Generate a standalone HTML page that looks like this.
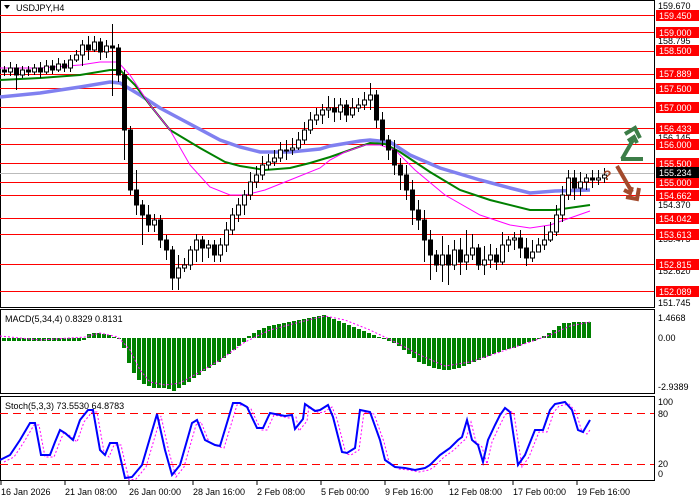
<!DOCTYPE html>
<html><head><meta charset="utf-8"><style>
body{margin:0;background:#fff;}
svg{display:block;font-family:"Liberation Sans",sans-serif;}
.b{fill:#000;stroke:#000;stroke-width:1}
.w{fill:#fff;stroke:#000;stroke-width:1}
</style></head><body>
<svg width="700" height="500" viewBox="0 0 700 500" xmlns="http://www.w3.org/2000/svg">
<rect width="700" height="500" fill="#fff"/>
<rect x="0.5" y="0.5" width="654" height="307" fill="none" stroke="#000"/>
<rect x="0.5" y="309.5" width="654" height="84" fill="none" stroke="#000"/>
<rect x="0.5" y="396.5" width="654" height="84" fill="none" stroke="#000"/>
<g stroke="#f00" stroke-width="1">
<line x1="0" x2="654" y1="15.5" y2="15.5"/><line x1="0" x2="654" y1="32.5" y2="32.5"/>
<line x1="0" x2="654" y1="51.5" y2="51.5"/><line x1="0" x2="654" y1="74.5" y2="74.5"/>
<line x1="0" x2="654" y1="88.5" y2="88.5"/><line x1="0" x2="654" y1="107.5" y2="107.5"/>
<line x1="0" x2="654" y1="128.5" y2="128.5"/><line x1="0" x2="654" y1="144.5" y2="144.5"/>
<line x1="0" x2="654" y1="163.5" y2="163.5"/><line x1="0" x2="654" y1="182.5" y2="182.5"/>
<line x1="0" x2="654" y1="195.5" y2="195.5"/><line x1="0" x2="654" y1="218.5" y2="218.5"/>
<line x1="0" x2="654" y1="234.5" y2="234.5"/><line x1="0" x2="654" y1="264.5" y2="264.5"/>
<line x1="0" x2="654" y1="291.5" y2="291.5"/>
</g>
<line x1="0" x2="654" y1="173.5" y2="173.5" stroke="#bbb"/>
<polyline fill="none" stroke="#8080f0" stroke-width="3.5" points="0,97 40,93 80,87 110,82 120,83 140,95 160,108 190,124 220,140 240,147 260,152 290,152 320,149 330,146 360,141 370,140 390,142 410,155 440,168 480,180 510,188 530,193 555,191 590,190"/>
<polyline fill="none" stroke="#008000" stroke-width="2" points="0,80 40,78 80,75 110,70 120,70 135,85 150,105 170,130 200,148 225,162 240,166 265,170 290,168 310,163 330,157 350,150 370,143 385,144 400,152 430,172 460,190 490,200 530,210 555,210 590,205"/>
<polyline fill="none" stroke="#ff00ff" stroke-width="1" points="0,68 40,68 80,65 100,62 118,62 130,75 150,105 170,130 190,165 210,187 230,195 245,195 265,190 290,180 320,168 330,160 345,152 365,145 380,145 395,150 415,170 445,195 480,215 510,225 530,228 550,225 570,218 590,211"/>
<path stroke="#000" stroke-width="1" fill="none" d="M4.5 66V76M10.5 62V76M16.5 64V90M22.5 66V78M28.5 66V76M34.5 64V75M40.5 62V78M46.5 60V74M52.5 60V74M58.5 58V72M64.5 60V72M70.5 55V72M76.5 50V62M82.5 40V66M88.5 36V60M94.5 36V52M100.5 38V60M106.5 40V58M112.5 24V96M118.5 44V82M124.5 70V160M130.5 126V195M136.5 170V215M142.5 200V245M148.5 205V232M154.5 214V232M160.5 215V248M166.5 235V260M172.5 246V290M178.5 255V290M184.5 258V272M190.5 246V270M196.5 234V262M202.5 236V262M208.5 240V258M214.5 240V262M220.5 238V262M226.5 222V252M232.5 208V235M238.5 198V222M244.5 190V215M250.5 172V200M256.5 166V188M262.5 156V180M268.5 154V170M274.5 150V166M280.5 142V162M286.5 140V160M292.5 138V155M298.5 132V150M304.5 122V144M310.5 112V134M316.5 108V125M322.5 104V124M328.5 96V118M334.5 98V122M340.5 98V120M346.5 100V122M352.5 98V118M358.5 98V112M364.5 92V110M370.5 83V110M376.5 90V128M382.5 112V146M388.5 135V160M394.5 140V175M400.5 158V190M406.5 165V200M412.5 180V225M418.5 200V230M424.5 210V262M430.5 230V280M436.5 250V272M442.5 236V282M448.5 245V285M454.5 240V270M460.5 238V275M466.5 230V270M472.5 234V260M478.5 244V270M484.5 246V275M490.5 244V268M496.5 248V270M502.5 232V265M508.5 236V252M514.5 232V250M520.5 230V258M526.5 238V266M532.5 240V262M538.5 238V252M544.5 226V250M550.5 222V242M556.5 205V236M562.5 186V222M568.5 170V200M574.5 170V200M580.5 172V196M586.5 174V190M592.5 170V188M598.5 170V185M604.5 168V183"/>
<g>
<rect class="b" x="2.5" y="70" width="4" height="2"/><rect class="w" x="8.5" y="68" width="4" height="4"/><rect class="b" x="14.5" y="68" width="4" height="7"/><rect class="w" x="20.5" y="70" width="4" height="5"/><rect class="b" x="26.5" y="70" width="4" height="2"/><rect class="w" x="32.5" y="68" width="4" height="4"/><rect class="b" x="38.5" y="68" width="4" height="4"/><rect class="w" x="44.5" y="66" width="4" height="6"/><rect class="b" x="50.5" y="66" width="4" height="4"/><rect class="w" x="56.5" y="64" width="4" height="6"/><rect class="b" x="62.5" y="64" width="4" height="4"/><rect class="w" x="68.5" y="60" width="4" height="8"/><rect class="w" x="74.5" y="55" width="4" height="5"/><rect class="w" x="80.5" y="45" width="4" height="10"/><rect class="b" x="86.5" y="45" width="4" height="5"/><rect class="w" x="92.5" y="42" width="4" height="8"/><rect class="b" x="98.5" y="42" width="4" height="10"/><rect class="w" x="104.5" y="46" width="4" height="6"/><rect class="b" x="110.5" y="46" width="4" height="2"/><rect class="b" x="116.5" y="48" width="4" height="27"/><rect class="b" x="122.5" y="75" width="4" height="55"/><rect class="b" x="128.5" y="130" width="4" height="60"/><rect class="b" x="134.5" y="190" width="4" height="15"/><rect class="b" x="140.5" y="205" width="4" height="10"/><rect class="b" x="146.5" y="215" width="4" height="10"/><rect class="w" x="152.5" y="220" width="4" height="5"/><rect class="b" x="158.5" y="220" width="4" height="20"/><rect class="b" x="164.5" y="240" width="4" height="10"/><rect class="b" x="170.5" y="250" width="4" height="28"/><rect class="w" x="176.5" y="268" width="4" height="10"/><rect class="w" x="182.5" y="265" width="4" height="3"/><rect class="w" x="188.5" y="250" width="4" height="15"/><rect class="w" x="194.5" y="240" width="4" height="10"/><rect class="b" x="200.5" y="240" width="4" height="8"/><rect class="w" x="206.5" y="245" width="4" height="3"/><rect class="b" x="212.5" y="245" width="4" height="10"/><rect class="w" x="218.5" y="245" width="4" height="10"/><rect class="w" x="224.5" y="230" width="4" height="15"/><rect class="w" x="230.5" y="215" width="4" height="15"/><rect class="w" x="236.5" y="205" width="4" height="10"/><rect class="w" x="242.5" y="195" width="4" height="10"/><rect class="w" x="248.5" y="182" width="4" height="13"/><rect class="w" x="254.5" y="175" width="4" height="7"/><rect class="w" x="260.5" y="165" width="4" height="10"/><rect class="w" x="266.5" y="162" width="4" height="3"/><rect class="w" x="272.5" y="158" width="4" height="4"/><rect class="w" x="278.5" y="150" width="4" height="8"/><rect class="b" x="284.5" y="150" width="4" height="1"/><rect class="w" x="290.5" y="148" width="4" height="2"/><rect class="w" x="296.5" y="140" width="4" height="8"/><rect class="w" x="302.5" y="130" width="4" height="10"/><rect class="w" x="308.5" y="120" width="4" height="10"/><rect class="w" x="314.5" y="115" width="4" height="5"/><rect class="w" x="320.5" y="110" width="4" height="5"/><rect class="w" x="326.5" y="108" width="4" height="2"/><rect class="b" x="332.5" y="108" width="4" height="4"/><rect class="w" x="338.5" y="105" width="4" height="7"/><rect class="b" x="344.5" y="105" width="4" height="10"/><rect class="w" x="350.5" y="108" width="4" height="7"/><rect class="w" x="356.5" y="105" width="4" height="3"/><rect class="w" x="362.5" y="100" width="4" height="5"/><rect class="w" x="368.5" y="95" width="4" height="5"/><rect class="b" x="374.5" y="95" width="4" height="25"/><rect class="b" x="380.5" y="120" width="4" height="20"/><rect class="b" x="386.5" y="140" width="4" height="10"/><rect class="b" x="392.5" y="150" width="4" height="15"/><rect class="b" x="398.5" y="165" width="4" height="10"/><rect class="b" x="404.5" y="175" width="4" height="15"/><rect class="b" x="410.5" y="190" width="4" height="20"/><rect class="b" x="416.5" y="210" width="4" height="10"/><rect class="b" x="422.5" y="220" width="4" height="20"/><rect class="b" x="428.5" y="240" width="4" height="15"/><rect class="b" x="434.5" y="255" width="4" height="10"/><rect class="w" x="440.5" y="255" width="4" height="10"/><rect class="b" x="446.5" y="255" width="4" height="10"/><rect class="w" x="452.5" y="250" width="4" height="15"/><rect class="b" x="458.5" y="250" width="4" height="12"/><rect class="w" x="464.5" y="255" width="4" height="7"/><rect class="w" x="470.5" y="248" width="4" height="7"/><rect class="b" x="476.5" y="248" width="4" height="17"/><rect class="w" x="482.5" y="260" width="4" height="5"/><rect class="w" x="488.5" y="255" width="4" height="5"/><rect class="b" x="494.5" y="255" width="4" height="7"/><rect class="w" x="500.5" y="245" width="4" height="17"/><rect class="w" x="506.5" y="240" width="4" height="5"/><rect class="w" x="512.5" y="238" width="4" height="2"/><rect class="b" x="518.5" y="238" width="4" height="10"/><rect class="b" x="524.5" y="248" width="4" height="10"/><rect class="w" x="530.5" y="252" width="4" height="6"/><rect class="w" x="536.5" y="245" width="4" height="7"/><rect class="w" x="542.5" y="240" width="4" height="5"/><rect class="w" x="548.5" y="232" width="4" height="8"/><rect class="w" x="554.5" y="215" width="4" height="17"/><rect class="w" x="560.5" y="195" width="4" height="20"/><rect class="w" x="566.5" y="178" width="4" height="17"/><rect class="b" x="572.5" y="178" width="4" height="10"/><rect class="w" x="578.5" y="182" width="4" height="6"/><rect class="w" x="584.5" y="178" width="4" height="4"/><rect class="b" x="590.5" y="178" width="4" height="2"/><rect class="w" x="596.5" y="178" width="4" height="2"/><rect class="w" x="602.5" y="175" width="4" height="3"/>
</g>
<g font-size="9" fill="#000">
<text x="658" y="9">159.670</text><text x="658" y="44">158.795</text><text x="658" y="141">156.145</text>
<text x="658" y="208">154.370</text><text x="658" y="242">153.475</text><text x="658" y="274">152.620</text><text x="658" y="306">151.745</text>
</g>
<g fill="#f00">
<rect x="656" y="10" width="43" height="11"/><rect x="656" y="27" width="43" height="11"/><rect x="656" y="45" width="43" height="11"/>
<rect x="656" y="68" width="43" height="11"/><rect x="656" y="83" width="43" height="11"/><rect x="656" y="102" width="43" height="11"/>
<rect x="656" y="123" width="43" height="11"/><rect x="656" y="139" width="43" height="11"/><rect x="656" y="158" width="43" height="11"/>
<rect x="656" y="177" width="43" height="11"/><rect x="656" y="190" width="43" height="11"/><rect x="656" y="213" width="43" height="11"/>
<rect x="656" y="229" width="43" height="11"/><rect x="656" y="259" width="43" height="11"/><rect x="656" y="286" width="43" height="11"/>
</g>
<rect x="656" y="167" width="43" height="11" fill="#000"/>
<g font-size="9" fill="#fff">
<text x="659" y="19">159.450</text><text x="659" y="36">159.000</text><text x="659" y="54">158.500</text>
<text x="659" y="77">157.889</text><text x="659" y="92">157.500</text><text x="659" y="111">157.000</text>
<text x="659" y="132">156.433</text><text x="659" y="148">156.000</text><text x="659" y="167">155.500</text>
<text x="659" y="176">155.234</text><text x="659" y="186">155.000</text><text x="659" y="199">154.662</text>
<text x="659" y="222">154.042</text><text x="659" y="238">153.613</text><text x="659" y="268">152.815</text>
<text x="659" y="295">152.089</text>
</g>
<!-- arrows -->
<g fill="none" stroke="#3c7d47" stroke-width="4" stroke-linecap="butt" stroke-linejoin="miter">
<path d="M621,159 L643,159 M622,159 L633,140"/>
<path d="M625,134 L635,128 L640,138 M628,141 L634,137 L637,143"/>
</g>
<g fill="none" stroke="#a24a2c" stroke-width="4" stroke-linecap="butt" stroke-linejoin="miter">
<path d="M617,166 L632,192"/>
<path d="M626,197 L637,199 L639,188 M624,190 L630,193 L632,187"/>
</g>
<text x="603" y="180" font-size="14" font-weight="bold" fill="#a24a2c">?</text>
<text x="16" y="11" font-size="9">USDJPY,H4</text>
<polygon points="4,5 10,5 7,9" fill="#000"/>
<text x="5" y="322" font-size="9">MACD(5,34,4) 0.8329 0.8131</text>
<g fill="#008000">
<rect x="2" y="338" width="4" height="3"/><rect x="7" y="338" width="4" height="3"/><rect x="12" y="338" width="4" height="3"/><rect x="17" y="338" width="4" height="3"/><rect x="22" y="338" width="4" height="3"/><rect x="27" y="338" width="4" height="3"/><rect x="32" y="338" width="4" height="3"/><rect x="37" y="338" width="4" height="3"/><rect x="42" y="338" width="4" height="3"/><rect x="47" y="338" width="4" height="3"/><rect x="52" y="338" width="4" height="3"/><rect x="57" y="338" width="4" height="3"/><rect x="62" y="338" width="4" height="3"/><rect x="67" y="338" width="4" height="3"/><rect x="72" y="338" width="4" height="3"/><rect x="77" y="338" width="4" height="3"/><rect x="82" y="338" width="4" height="2"/>
<rect x="87" y="334" width="4" height="4"/><rect x="92" y="333" width="4" height="5"/><rect x="97" y="333" width="4" height="5"/><rect x="102" y="334" width="4" height="4"/><rect x="107" y="335" width="4" height="3"/><rect x="112" y="337" width="4" height="1"/><rect x="117" y="338" width="4" height="1"/>
<rect x="122" y="338" width="4" height="10"/><rect x="127" y="338" width="4" height="25"/><rect x="132" y="338" width="4" height="35"/><rect x="137" y="338" width="4" height="42"/><rect x="142" y="338" width="4" height="46"/><rect x="147" y="338" width="4" height="48"/><rect x="152" y="338" width="4" height="50"/><rect x="157" y="338" width="4" height="50"/><rect x="162" y="338" width="4" height="50"/><rect x="167" y="338" width="4" height="51"/><rect x="172" y="338" width="4" height="53"/><rect x="177" y="338" width="4" height="50"/><rect x="182" y="338" width="4" height="47"/>
<rect x="187" y="338" width="4" height="44"/><rect x="192" y="338" width="4" height="40"/><rect x="197" y="338" width="4" height="37"/><rect x="202" y="338" width="4" height="33"/><rect x="207" y="338" width="4" height="30"/><rect x="212" y="338" width="4" height="27"/><rect x="217" y="338" width="4" height="24"/><rect x="222" y="338" width="4" height="20"/><rect x="227" y="338" width="4" height="16"/><rect x="232" y="338" width="4" height="12"/><rect x="237" y="338" width="4" height="8"/><rect x="242" y="338" width="4" height="4"/>
<rect x="247" y="336" width="4" height="2"/><rect x="252" y="333" width="4" height="5"/><rect x="257" y="330" width="4" height="8"/><rect x="262" y="328" width="4" height="10"/><rect x="267" y="326" width="4" height="12"/><rect x="272" y="325" width="4" height="13"/><rect x="277" y="324" width="4" height="14"/><rect x="282" y="323" width="4" height="15"/><rect x="287" y="322" width="4" height="16"/><rect x="292" y="321" width="4" height="17"/><rect x="297" y="320" width="4" height="18"/><rect x="302" y="319" width="4" height="19"/><rect x="307" y="318" width="4" height="20"/><rect x="312" y="317" width="4" height="21"/><rect x="317" y="316" width="4" height="22"/><rect x="322" y="315" width="4" height="23"/><rect x="327" y="317" width="4" height="21"/>
<rect x="332" y="319" width="4" height="19"/><rect x="337" y="321" width="4" height="17"/><rect x="342" y="323" width="4" height="15"/><rect x="347" y="325" width="4" height="13"/><rect x="352" y="327" width="4" height="11"/><rect x="357" y="329" width="4" height="9"/><rect x="362" y="331" width="4" height="7"/><rect x="367" y="333" width="4" height="5"/><rect x="372" y="335" width="4" height="3"/><rect x="377" y="337" width="4" height="1"/><rect x="382" y="338" width="4" height="1"/><rect x="387" y="338" width="4" height="3"/><rect x="392" y="338" width="4" height="5"/>
<rect x="397" y="338" width="4" height="8"/><rect x="402" y="338" width="4" height="12"/><rect x="407" y="338" width="4" height="16"/><rect x="412" y="338" width="4" height="20"/><rect x="417" y="338" width="4" height="24"/><rect x="422" y="338" width="4" height="26"/><rect x="427" y="338" width="4" height="28"/><rect x="432" y="338" width="4" height="30"/><rect x="437" y="338" width="4" height="31"/><rect x="442" y="338" width="4" height="32"/><rect x="447" y="338" width="4" height="32"/><rect x="452" y="338" width="4" height="31"/><rect x="457" y="338" width="4" height="30"/><rect x="462" y="338" width="4" height="28"/><rect x="467" y="338" width="4" height="26"/><rect x="472" y="338" width="4" height="24"/><rect x="477" y="338" width="4" height="22"/><rect x="482" y="338" width="4" height="20"/><rect x="487" y="338" width="4" height="18"/><rect x="492" y="338" width="4" height="16"/><rect x="497" y="338" width="4" height="14"/><rect x="502" y="338" width="4" height="12"/><rect x="507" y="338" width="4" height="11"/><rect x="512" y="338" width="4" height="10"/><rect x="517" y="338" width="4" height="8"/><rect x="522" y="338" width="4" height="6"/><rect x="527" y="338" width="4" height="4"/><rect x="532" y="338" width="4" height="3"/><rect x="537" y="338" width="4" height="1"/>
<rect x="542" y="336" width="4" height="2"/><rect x="547" y="333" width="4" height="5"/><rect x="552" y="330" width="4" height="8"/><rect x="557" y="326" width="4" height="12"/><rect x="562" y="323" width="4" height="15"/><rect x="567" y="323" width="4" height="15"/><rect x="572" y="322" width="4" height="16"/><rect x="577" y="322" width="4" height="16"/><rect x="582" y="322" width="4" height="16"/><rect x="587" y="322" width="4" height="16"/>
</g>
<polyline fill="none" stroke="#ff00ff" stroke-dasharray="2,2" points="0,336 40,340 85,337 100,333 118,337 130,350 140,370 150,382 165,385 180,383 200,372 220,360 245,342 270,330 300,322 325,316 345,320 370,330 395,342 420,355 445,366 470,362 500,352 530,342 550,335 570,326 590,322"/>
<g font-size="9"><text x="658" y="321">1.4668</text><text x="658" y="341">0.00</text><text x="658" y="390">-2.9389</text></g>
<text x="5" y="409" font-size="9">Stoch(5,3,3) 73.5530 64.8783</text>
<g stroke="#f00" stroke-width="1" stroke-dasharray="8,5"><line x1="0" x2="654" y1="413.5" y2="413.5"/><line x1="0" x2="654" y1="464.5" y2="464.5"/></g>
<polyline fill="none" stroke="#ff00ff" stroke-dasharray="2,2" transform="translate(4,2)" points="0,460 10,455 20,440 30,423 35,423 41,455 50,455 55,442 60,430 65,433 73,440 80,420 88,410 93,410 100,450 105,455 110,443 117,443 125,478 132,477 142,465 157,414 165,450 172,475 180,465 192,423 197,420 205,440 215,445 220,446 233,403 240,403 247,407 257,428 263,428 270,413 285,416 292,415 295,429 303,419 305,404 315,411 320,410 328,405 333,417 342,452 347,453 355,448 360,410 370,412 380,440 385,460 395,467 405,468 415,470 425,468 430,465 440,455 450,448 458,440 462,437 467,420 472,440 478,445 483,462 488,440 495,425 500,415 505,408 510,412 518,465 525,455 535,430 543,430 550,410 555,404 565,402 572,410 578,430 583,432 586,428"/>
<polyline fill="none" stroke="#0000ff" stroke-width="2" points="0,460 10,455 20,440 30,423 35,423 41,455 50,455 55,442 60,430 65,433 73,440 80,420 88,410 93,410 100,450 105,455 110,443 117,443 125,478 132,477 142,465 157,414 165,450 172,475 180,465 192,423 197,420 205,440 215,445 220,446 233,403 240,403 247,407 257,428 263,428 270,413 285,416 292,415 295,429 303,419 305,404 315,411 320,410 328,405 333,417 342,452 347,453 355,448 360,410 370,412 380,440 385,460 395,467 405,468 415,470 425,468 430,465 440,455 450,448 458,440 462,437 467,420 472,440 478,445 483,462 488,440 495,425 500,415 505,408 510,412 518,465 525,455 535,430 543,430 550,410 555,404 565,402 572,410 578,430 583,432 590,420"/>
<g font-size="9"><text x="658" y="405">100</text><text x="658" y="417">80</text><text x="658" y="467">20</text><text x="658" y="477">0</text></g>
<g stroke="#000"><line x1="1" x2="1" y1="481" y2="485"/><line x1="65" x2="65" y1="481" y2="485"/><line x1="129" x2="129" y1="481" y2="485"/><line x1="193" x2="193" y1="481" y2="485"/><line x1="257" x2="257" y1="481" y2="485"/><line x1="321" x2="321" y1="481" y2="485"/><line x1="385" x2="385" y1="481" y2="485"/><line x1="449" x2="449" y1="481" y2="485"/><line x1="513" x2="513" y1="481" y2="485"/><line x1="577" x2="577" y1="481" y2="485"/></g>
<g font-size="9"><text x="1" y="495">16 Jan 2026</text><text x="65" y="495">21 Jan 08:00</text><text x="129" y="495">26 Jan 00:00</text><text x="193" y="495">28 Jan 16:00</text><text x="257" y="495">2 Feb 08:00</text><text x="321" y="495">5 Feb 00:00</text><text x="385" y="495">9 Feb 16:00</text><text x="449" y="495">12 Feb 08:00</text><text x="513" y="495">17 Feb 00:00</text><text x="577" y="495">19 Feb 16:00</text></g>
</svg>
</body></html>
